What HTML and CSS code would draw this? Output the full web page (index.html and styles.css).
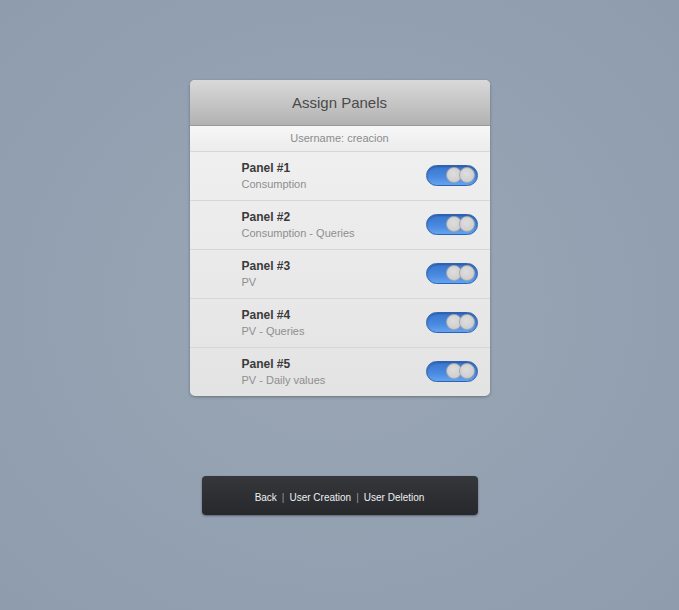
FILE: index.html
```html
<!DOCTYPE html>
<html>
<head>
<meta charset="utf-8">
<link rel="stylesheet" href="styles.css">
</head>
<body>
<div class="page">
  <div class="card">
    <div class="card-header">Assign Panels</div>
    <div class="username">Username: creacion</div>
    <div class="row">
      <div class="info"><div class="name">Panel #1</div><div class="sub">Consumption</div></div>
      <div class="toggle"><span class="knob"></span><span class="knob"></span></div>
    </div>
    <div class="row">
      <div class="info"><div class="name">Panel #2</div><div class="sub">Consumption - Queries</div></div>
      <div class="toggle"><span class="knob"></span><span class="knob"></span></div>
    </div>
    <div class="row">
      <div class="info"><div class="name">Panel #3</div><div class="sub">PV</div></div>
      <div class="toggle"><span class="knob"></span><span class="knob"></span></div>
    </div>
    <div class="row">
      <div class="info"><div class="name">Panel #4</div><div class="sub">PV - Queries</div></div>
      <div class="toggle"><span class="knob"></span><span class="knob"></span></div>
    </div>
    <div class="row last">
      <div class="info"><div class="name">Panel #5</div><div class="sub">PV - Daily values</div></div>
      <div class="toggle"><span class="knob"></span><span class="knob"></span></div>
    </div>
  </div>
  <div class="footer">
    <a class="link">Back</a><span class="sep">|</span><a class="link">User Creation</a><span class="sep">|</span><a class="link">User Deletion</a>
  </div>
</div>
</body>
</html>
```
FILE: styles.css
```css
html, body {
  margin: 0;
  padding: 0;
  height: 100%;
}
body {
  background: radial-gradient(ellipse at 50% 50%, #9ba7b5 0%, #95a2b2 45%, #8f9cae 100%);
  font-family: "Liberation Sans", Arial, sans-serif;
}
.page {
  display: flex;
  flex-direction: column;
  align-items: center;
  padding-top: 80px;
}
.card {
  width: 300px;
  border-radius: 5px;
  overflow: hidden;
  background: linear-gradient(#f3f3f3, #e3e3e3);
  box-shadow: 0 1px 3px rgba(40, 50, 65, 0.45);
}
.card-header {
  height: 45px;
  line-height: 45px;
  text-align: center;
  font-size: 15px;
  color: #4a4a4a;
  background: linear-gradient(#d9d9d9, #b2b2b2);
  border-bottom: 1px solid #999;
}
.username {
  height: 25px;
  line-height: 25px;
  text-align: center;
  font-size: 11px;
  color: #8c8c8c;
  background: linear-gradient(#f7f7f7, #ececec);
  border-bottom: 1px solid #d6d6d6;
}
.row {
  display: flex;
  align-items: center;
  justify-content: space-between;
  padding: 8px 12px 8px 52px;
  border-bottom: 1px solid #d6d6d6;
}
.row.last {
  border-bottom: none;
}
.name {
  font-size: 12px;
  font-weight: bold;
  color: #3a3a3a;
  line-height: 16px;
}
.sub {
  font-size: 11px;
  color: #8e8e8e;
  line-height: 16px;
}
.toggle {
  box-sizing: border-box;
  width: 52px;
  height: 21px;
  border-radius: 11px;
  border: 1px solid #2a64b4;
  background: linear-gradient(#3a76d0, #4a8ae0 60%, #66a4ee);
  box-shadow: inset 0 1px 2px rgba(0, 0, 0, 0.25);
  display: flex;
  justify-content: flex-end;
  align-items: center;
  padding-right: 2px;
  margin-top: -2px;
}
.knob {
  box-sizing: border-box;
  width: 16px;
  height: 16px;
  border-radius: 50%;
  background: radial-gradient(circle at 45% 40%, #dedede, #cfcfcf 70%, #bdbdbd);
  border: 1px solid #a9a9a9;
}
.knob + .knob {
  margin-left: -3px;
}
.footer {
  margin-top: 80px;
  width: 276px;
  height: 39px;
  box-sizing: border-box;
  border-radius: 4px;
  background: linear-gradient(#35373b, #27282b);
  box-shadow: 0 1px 2px rgba(30, 35, 45, 0.5);
  display: flex;
  justify-content: center;
  align-items: center;
  padding-top: 3px;
  font-size: 10px;
  color: #eef0f3;
}
.link {
  color: #eef0f3;
}
.sep {
  color: #9a9a9a;
  margin: 0 5px;
}
```
